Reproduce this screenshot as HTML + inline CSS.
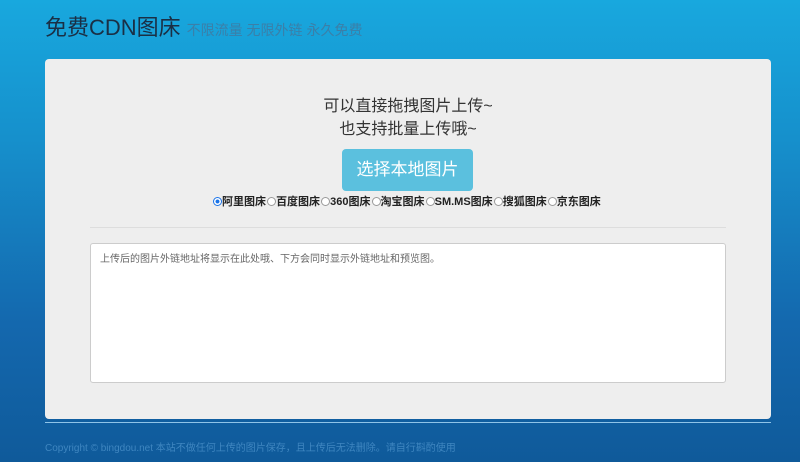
<!DOCTYPE html><html><head><meta charset="utf-8"><style>
*{margin:0;padding:0;box-sizing:border-box}
body{width:800px;height:462px;overflow:hidden;background:linear-gradient(#18a8de 0%,#1690cc 30%,#1468ae 70%,#0f5a9a 100%);font-family:"Liberation Sans","Noto Sans CJK SC",sans-serif;position:relative}
.t{position:absolute;left:45px;top:10px;font-size:22px;color:#1a2f45;white-space:nowrap}
.t small{font-size:14px;color:#3b7fa8;margin-left:6px}
.card{position:absolute;left:45px;top:59px;width:726px;height:360px;background:#eeeeee;border-radius:4px}
.l1{position:absolute;left:0;width:726px;text-align:center;font-size:16px;color:#333}
.btn{position:absolute;left:297px;top:90px;width:131px;height:42px;background:#5bc0de;border-radius:4px;color:#fff;font-size:17px;text-align:center;line-height:42px}
.r{position:absolute;left:168px;top:134px;font-size:11px;font-weight:bold;color:#222;white-space:nowrap;word-spacing:-2px}
.r i{display:inline-block;width:9px;height:9px;border:1px solid #999;border-radius:50%;vertical-align:-1px;background:#fff}
.r i.on{border-color:#1a73e8;background:radial-gradient(#1a73e8 35%,#fff 45%)}
.hr{position:absolute;left:45px;top:168px;width:636px;height:1px;background:#ddd}
.ta{position:absolute;left:45px;top:184px;width:636px;height:140px;background:#fff;border:1px solid #ccc;border-radius:3px;font-size:10px;color:#666;padding:6px 9px}
.line{position:absolute;left:45px;top:422px;width:726px;height:1px;background:#8fc4e8}
.f{position:absolute;left:45px;top:439px;font-size:10px;color:#3f86c0;white-space:nowrap}
</style></head><body>
<div class="t">免费CDN图床<small>不限流量 无限外链 永久免费</small></div>
<div class="card">
<div class="l1" style="top:33px">可以直接拖拽图片上传~</div>
<div class="l1" style="top:56px">也支持批量上传哦~</div>
<div class="btn">选择本地图片</div>
<div class="r"><i class="on"></i>阿里图床 <i></i>百度图床 <i></i>360图床 <i></i>淘宝图床 <i></i>SM.MS图床 <i></i>搜狐图床 <i></i>京东图床</div>
<div class="hr"></div>
<div class="ta">上传后的图片外链地址将显示在此处哦、下方会同时显示外链地址和预览图。</div>
</div>
<div class="line"></div>
<div class="f">Copyright © bingdou.net 本站不做任何上传的图片保存，且上传后无法删除。请自行斟酌使用</div>
</body></html>
